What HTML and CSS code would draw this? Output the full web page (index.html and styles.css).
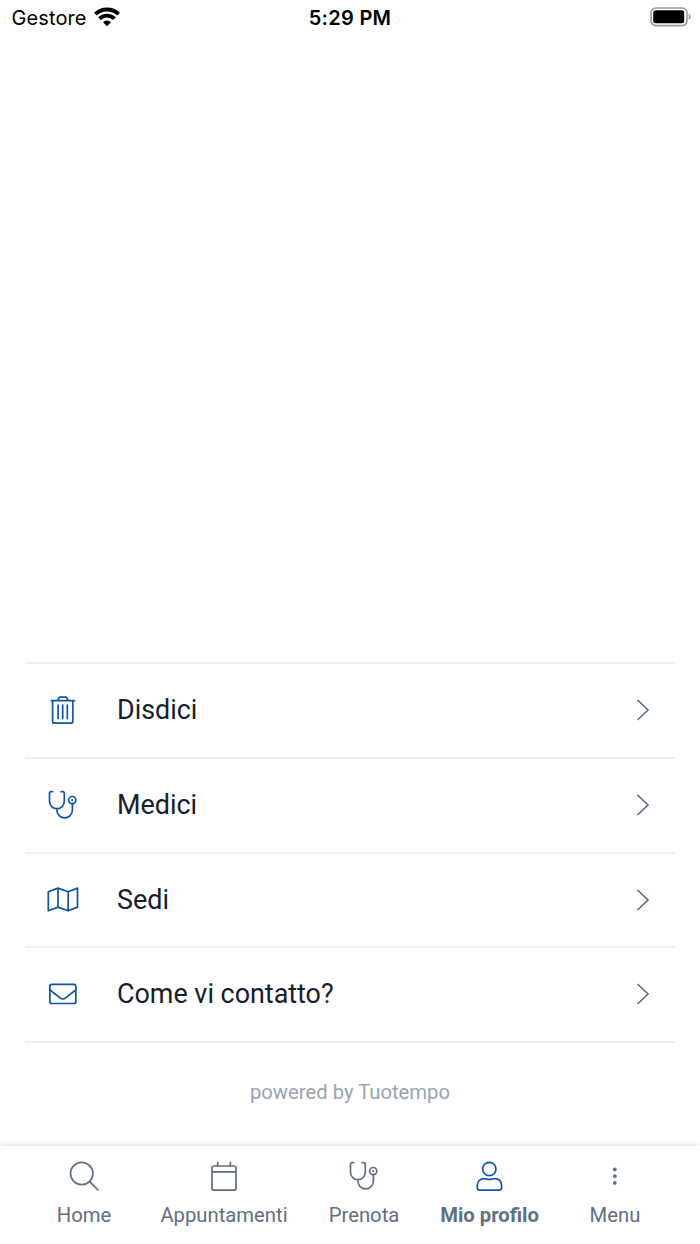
FILE: index.html
```html
<!DOCTYPE html>
<html lang="it">
<head>
<meta charset="utf-8">
<title>Mio profilo</title>
<link rel="stylesheet" href="styles.css">
</head>
<body>
<svg class="defs" aria-hidden="true">
  <symbol id="stethoscope" viewBox="0 0 32 32">
    <path d="M5.7 2.7H4a1.5 1.5 0 0 0-1.5 1.5v8.1a7.4 7.4 0 0 0 14.8 0V4.2a1.5 1.5 0 0 0-1.5-1.5h-1.7M9.9 19.7v1.4a7.75 7.75 0 0 0 15.5 0v-6.4"/>
    <circle cx="25.2" cy="11.1" r="3.6"/><circle class="dot" cx="25.2" cy="11.1" r="1.1"/>
  </symbol>
  <symbol id="chevron" viewBox="0 0 14 22"><path d="M1.5 1l10.5 10-10.5 10"/></symbol>
</svg>
<div class="screen">
  <header class="status">
    <div class="carrier"><span>Gestore</span>
      <svg class="wifi" viewBox="0 0 26 20">
        <path d="M1.4 7.2a16.5 16.5 0 0 1 23.2 0M5.5 11.7a10.6 10.6 0 0 1 15 0"/>
        <path class="tip" d="M13 19.3l-4-4.1a5.6 5.6 0 0 1 8 0z"/>
      </svg>
    </div>
    <div class="time">5:29 PM</div>
    <svg class="battery" viewBox="0 0 42 20">
      <rect class="shell" x="1" y="1" width="36" height="17.6" rx="5"/>
      <rect x="3.2" y="3.3" width="31" height="13" rx="2.5"/>
      <path class="cap" d="M38.7 6.8q2 .8 2 3t-2 3z"/>
    </svg>
  </header>
  <main class="content">
    <ul class="list">
      <li class="row">
        <svg class="icon" viewBox="0 0 32 32"><path d="M4.3 6.7h23.2M10.8 6.3l1-2.2a1.6 1.6 0 0 1 1.4-.9h5.4a1.6 1.6 0 0 1 1.4.9l1 2.2M5.6 7v20.2a2 2 0 0 0 2 2h16.2a2 2 0 0 0 2-2V7M11.1 11v13.5M15.7 11v13.5M20.3 11v13.5"/></svg>
        <span class="label">Disdici</span><svg class="chevron"><use href="#chevron"/></svg>
      </li>
      <li class="row">
        <svg class="icon"><use href="#stethoscope"/></svg>
        <span class="label">Medici</span><svg class="chevron"><use href="#chevron"/></svg>
      </li>
      <li class="row">
        <svg class="icon" viewBox="0 0 32 32"><path d="M1.3 7.7L11 4.1l10.2 3.6 9.3-3.6V23.1l-9.3 3.7L11 23.1l-9.7 3.7zM11 4.1v19M21.2 7.7v19.1"/></svg>
        <span class="label">Sedi</span><svg class="chevron"><use href="#chevron"/></svg>
      </li>
      <li class="row">
        <svg class="icon" viewBox="0 0 32 32"><rect x="2.9" y="6.3" width="25.9" height="19.2" rx="2"/><path d="M3 12l10.1 7.9a4.5 4.5 0 0 0 5.5 0L28.7 12"/></svg>
        <span class="label">Come vi contatto?</span><svg class="chevron"><use href="#chevron"/></svg>
      </li>
    </ul>
    <p class="powered">powered by Tuotempo</p>
  </main>
  <nav class="tabs">
    <a class="tab"><svg class="icon" viewBox="0 0 32 32"><circle cx="13.7" cy="13.5" r="11.2"/><path d="M21.7 21.7l8.1 8.1"/></svg><span>Home</span></a>
    <a class="tab"><svg class="icon" viewBox="0 0 32 32"><rect x="4" y="6" width="24" height="24.2" rx="2"/><path d="M4 11.9h24M9.7 2.4v3.6M22.4 2.4v3.6"/></svg><span>Appuntamenti</span></a>
    <a class="tab"><svg class="icon"><use href="#stethoscope"/></svg><span>Prenota</span></a>
    <a class="tab active"><svg class="icon" viewBox="0 0 32 32"><circle cx="15.3" cy="9" r="6.7"/><path d="M10.1 18.6c2.3 0 2.8.9 5.3.9s3-.9 5.3-.9a6.6 6.6 0 0 1 6.9 6.7v2.7a2.1 2.1 0 0 1-2.1 2.1H5.4A2.1 2.1 0 0 1 3.3 28v-2.7a6.6 6.6 0 0 1 6.8-6.7z"/></svg><span>Mio profilo</span></a>
    <a class="tab"><svg class="icon" viewBox="0 0 32 32"><circle class="dot" cx="15.8" cy="9.4" r="1.9"/><circle class="dot" cx="15.8" cy="16.2" r="1.9"/><circle class="dot" cx="15.8" cy="22.9" r="1.9"/></svg><span>Menu</span></a>
  </nav>
</div>
</body>
</html>
```
FILE: styles.css
```css
* { box-sizing: border-box; }
body { margin: 0; background: #fff; font-family: Roboto, sans-serif; }
.defs { display: none; }
.screen { display: flex; flex-direction: column; height: 1244px; overflow: hidden; }

.status {
  display: grid;
  grid-template-columns: 1fr auto 1fr;
  align-items: center;
  height: 35px;
  padding: 0 8px 0 11.5px;
  font-family: Inter, sans-serif;
  font-size: 20px;
  color: #000;
}
.carrier { display: flex; align-items: center; gap: 7px; padding-top: 1px; letter-spacing: .1px; }
.wifi { width: 26px; height: 20px; margin-top: -2px; fill: none; stroke: #000; stroke-width: 3.9; }
.wifi .tip { fill: #000; stroke: none; }
.time { padding-top: 1px; margin-left: -3.5px; font-weight: 600; letter-spacing: .3px; }
.battery { width: 42px; height: 20px; margin-top: -1px; justify-self: end; }
.battery .shell { fill: none; stroke: #999; stroke-width: 1.6; }
.battery .cap { fill: #999; }

.content { flex: 1; display: flex; flex-direction: column; justify-content: flex-end; padding: 0 25px; }
.list { margin: 0; padding: 0; list-style: none; border-top: 2px solid #eeeff2; }
.row {
  display: flex;
  align-items: center;
  height: 94.67px;
  padding: 0 25px 1px 22px;
  border-bottom: 2px solid #eeeff2;
}
.label { flex: 1; margin-left: 38px; font-size: 26.9px; line-height: 32px; color: #14202f; }
.icon {
  display: block;
  width: 32px;
  height: 32px;
  color: #0f55a4;
  fill: none;
  stroke: currentColor;
  stroke-width: 1.7;
  stroke-linecap: round;
  stroke-linejoin: round;
}
.dot { fill: currentColor; stroke: none; }
.chevron { width: 14px; height: 22px; fill: none; stroke: #5e7082; stroke-width: 1.7; }
.powered { margin: 34px 0 39px; text-align: center; font-size: 20.25px; line-height: 30px; color: #98a4b1; }

.tabs {
  display: grid;
  grid-template-columns: 140px 140px 140px 111px 140px;
  height: 98px;
  padding: 14px 15px 0 14px;
  background: #fff;
  box-shadow: 0 -1px 6px rgba(0, 0, 0, .14);
}
.tab { display: flex; flex-direction: column; align-items: center; gap: 9px; font-size: 20.25px; line-height: 28px; color: #5e7082; white-space: nowrap; }
.tab .icon { color: #5e7082; }
.tab.active { font-weight: 700; }
.tab.active .icon { color: #0f55a4; }
```
